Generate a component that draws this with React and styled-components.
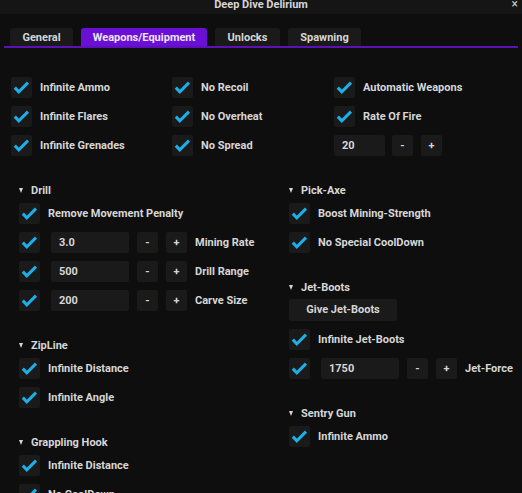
import React from 'react';
import styled, { createGlobalStyle } from 'styled-components';

const GlobalStyle = createGlobalStyle`
	html, body {
		margin: 0;
		padding: 0;
		background: #0e0e0e;
	}
	body {
		font-family: Roboto, "Liberation Sans", sans-serif;
		font-weight: 700;
		font-size: 11px;
		color: #d6d6d6;
	}
`;

const colors = {
	bg: '#0e0e0e',
	title: '#151515',
	frame: '#1a1a1a',
	accent: '#6a0fd6',
	line: '#5b10b8',
	check: '#1eaee8',
	text: '#d6d6d6',
};

function Check() {
	return (
		<svg width="21" height="21" viewBox="0 0 21 21">
			<path
				d="M3.8 10.6 L7.8 14.8 L17 5.6"
				fill="none"
				stroke={colors.check}
				strokeWidth="3"
			/>
		</svg>
	);
}

function Checkbox({ label }) {
	return (
		<Row>
			<Box>
				<Check />
			</Box>
			{label && <Label>{label}</Label>}
		</Row>
	);
}

function Slider({ value, label, width = 78, checked = true }) {
	return (
		<Row>
			{checked && (
				<Box $mr={11}>
					<Check />
				</Box>
			)}
			<Input $w={width}>{value}</Input>
			<StepButton $ml={checked ? 8 : 7}>-</StepButton>
			<StepButton $ml={8}>+</StepButton>
			{label && <Label $ml={8}>{label}</Label>}
		</Row>
	);
}

function Section({ title, children }) {
	return (
		<SectionBox>
			<Header>
				<Arrow />
				{title}
			</Header>
			{children}
		</SectionBox>
	);
}

export default function App() {
	return (
		<Window>
			<GlobalStyle />
			<TitleBar>
				Deep Dive Delirium
				<Close>×</Close>
			</TitleBar>
			<TabBar>
				<Tab $w={63}>General</Tab>
				<Tab $w={126} $active>Weapons/Equipment</Tab>
				<Tab $w={65}>Unlocks</Tab>
				<Tab $w={73}>Spawning</Tab>
			</TabBar>
			<Content>
				<TopGrid>
					<Column>
						<Checkbox label="Infinite Ammo" />
						<Checkbox label="Infinite Flares" />
						<Checkbox label="Infinite Grenades" />
					</Column>
					<Column>
						<Checkbox label="No Recoil" />
						<Checkbox label="No Overheat" />
						<Checkbox label="No Spread" />
					</Column>
					<Column>
						<Checkbox label="Automatic Weapons" />
						<Checkbox label="Rate Of Fire" />
						<Slider value="20" width={51} checked={false} />
					</Column>
				</TopGrid>
				<Sections>
					<Column>
						<Section title="Drill">
							<Checkbox label="Remove Movement Penalty" />
							<Slider value="3.0" label="Mining Rate" />
							<Slider value="500" label="Drill Range" />
							<Slider value="200" label="Carve Size" />
						</Section>
						<Section title="ZipLine">
							<Checkbox label="Infinite Distance" />
							<Checkbox label="Infinite Angle" />
						</Section>
						<Section title="Grappling Hook">
							<Checkbox label="Infinite Distance" />
							<Checkbox label="No CoolDown" />
						</Section>
					</Column>
					<Column>
						<Section title="Pick-Axe">
							<Checkbox label="Boost Mining-Strength" />
							<Checkbox label="No Special CoolDown" />
						</Section>
						<Section title="Jet-Boots">
							<Row>
								<Button>Give Jet-Boots</Button>
							</Row>
							<Checkbox label="Infinite Jet-Boots" />
							<Slider value="1750" label="Jet-Force" />
						</Section>
						<Section title="Sentry Gun">
							<Checkbox label="Infinite Ammo" />
						</Section>
					</Column>
				</Sections>
			</Content>
		</Window>
	);
}

const Window = styled.div`
	width: 522px;
	height: 493px;
	overflow: hidden;
	background: ${colors.bg};
`;

const TitleBar = styled.div`
	position: relative;
	height: 14px;
	background: ${colors.title};
	text-align: center;
	line-height: 10px;
	font-size: 11px;
	color: ${colors.text};
`;

const Close = styled.span`
	position: absolute;
	right: 4px;
	top: 0;
	font-size: 12px;
	line-height: 9px;
	font-weight: 400;
	color: #cfcfcf;
`;

const TabBar = styled.div`
	display: flex;
	gap: 8px;
	margin: 14px 4px 0;
	padding-left: 6px;
	border-bottom: 2px solid ${colors.line};
`;

const Tab = styled.div`
	width: ${(p) => p.$w}px;
	height: 18px;
	line-height: 20px;
	text-align: center;
	border-radius: 3px 3px 0 0;
	background: ${(p) => (p.$active ? colors.accent : colors.frame)};
	color: ${(p) => (p.$active ? '#ece6f5' : colors.text)};
`;

const Content = styled.div`
	padding-top: 29px;
`;

const TopGrid = styled.div`
	display: grid;
	grid-template-columns: 161px 162px 1fr;
	padding-left: 11px;
`;

const Column = styled.div`
	display: flex;
	flex-direction: column;
	gap: 8px;
`;

const Sections = styled.div`
	display: grid;
	grid-template-columns: 270px 1fr;
	padding-left: 19px;
	margin-top: 28px;

	& > ${Column} {
		gap: 28px;
	}
`;

const SectionBox = styled.div`
	display: flex;
	flex-direction: column;
	gap: 8px;
`;

const Header = styled.div`
	display: flex;
	align-items: center;
	height: 13px;
	line-height: 13px;
	margin-bottom: -2px;
`;

const Arrow = styled.span`
	width: 0;
	height: 0;
	margin: 0 8px 1px 0;
	border-left: 2.5px solid transparent;
	border-right: 2.5px solid transparent;
	border-top: 5px solid ${colors.text};
`;

const Row = styled.div`
	display: flex;
	align-items: center;
	height: 21px;
	white-space: nowrap;
`;

const Box = styled.div`
	flex: none;
	width: 21px;
	height: 21px;
	margin-right: ${(p) => p.$mr ?? 8}px;
	border-radius: 2px;
	background: ${colors.frame};
`;

const Label = styled.span`
	margin-left: ${(p) => p.$ml ?? 0}px;
	color: ${colors.text};
`;

const Input = styled.div`
	width: ${(p) => p.$w}px;
	height: 21px;
	line-height: 21px;
	padding-left: 8px;
	box-sizing: border-box;
	border-radius: 2px;
	background: ${colors.frame};
`;

const StepButton = styled.div`
	width: 21px;
	height: 21px;
	line-height: 21px;
	margin-left: ${(p) => p.$ml}px;
	text-align: center;
	border-radius: 2px;
	background: ${colors.frame};
`;

const Button = styled.div`
	width: 108px;
	height: 22px;
	line-height: 22px;
	margin-top: -2px;
	text-align: center;
	border-radius: 2px;
	background: ${colors.frame};
`;
